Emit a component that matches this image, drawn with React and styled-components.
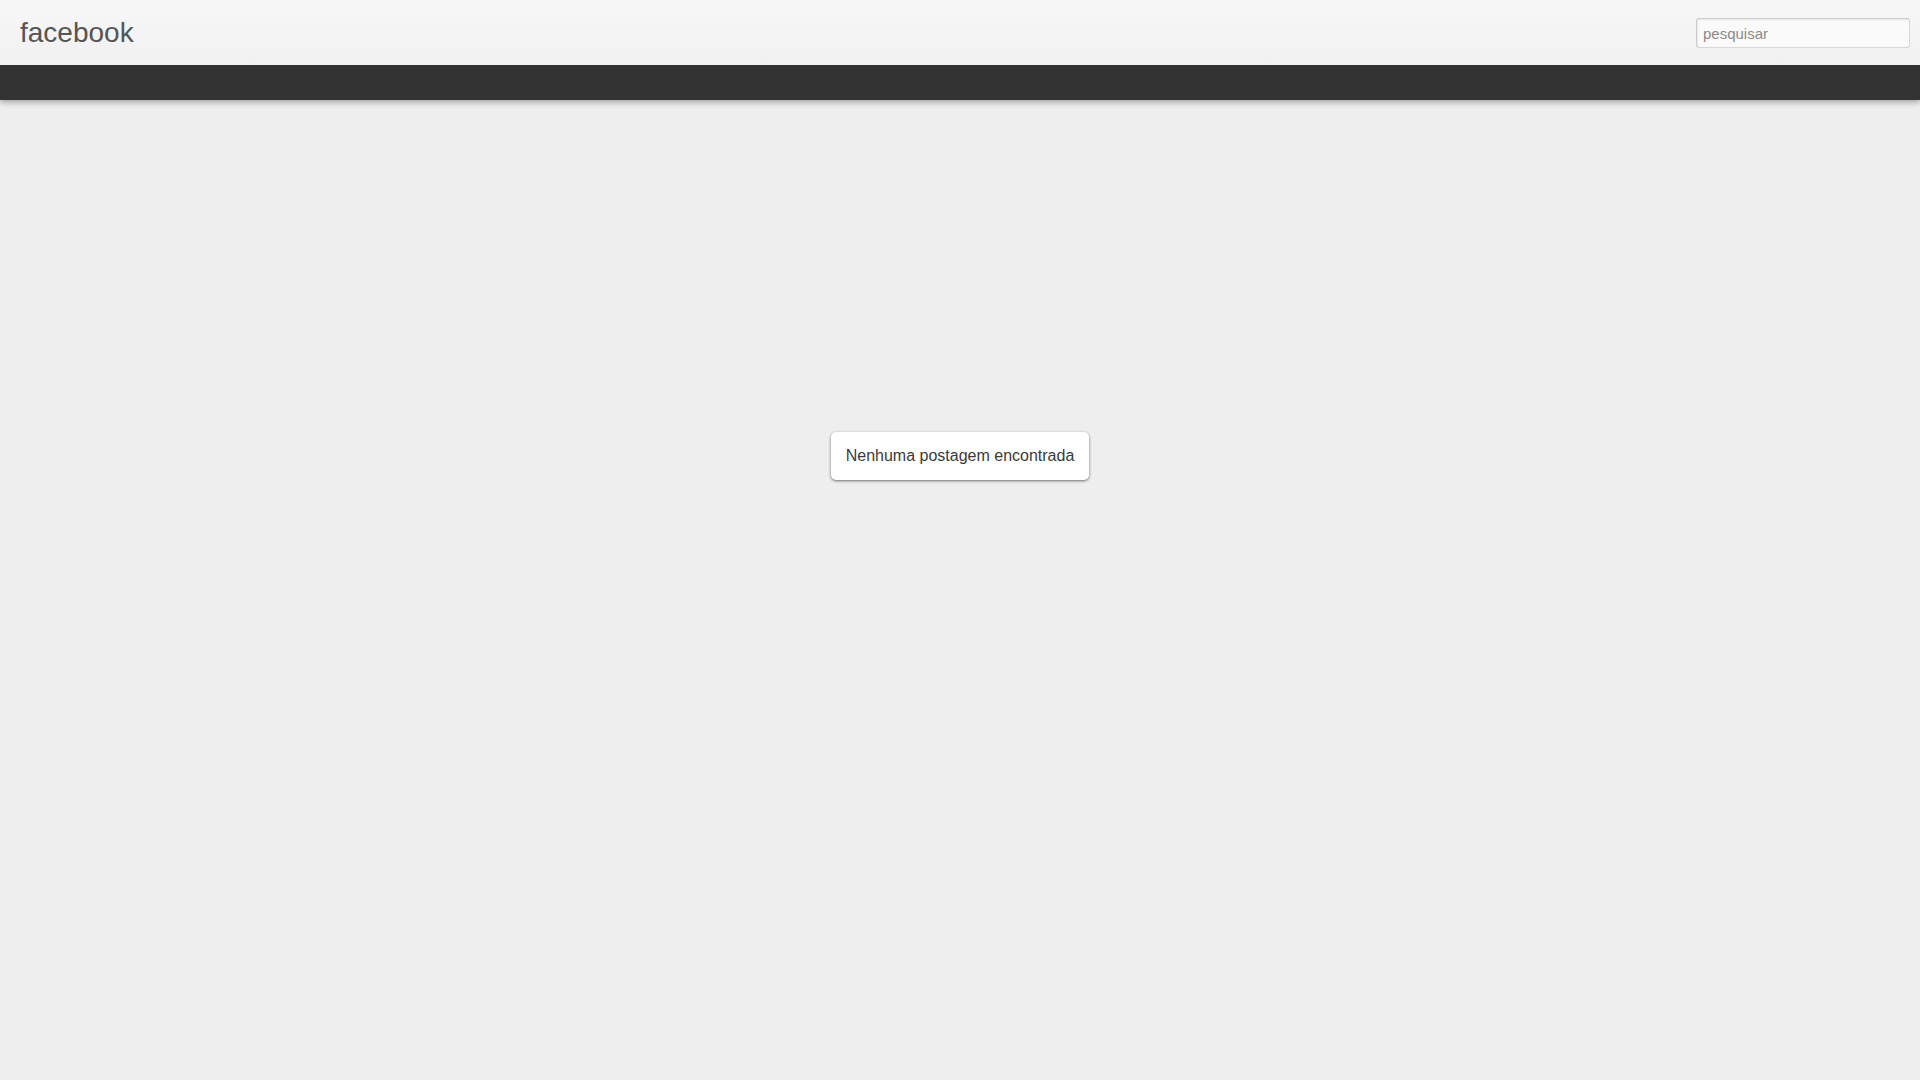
import React from "react";
import styled, { createGlobalStyle } from "styled-components";

const Global = createGlobalStyle`
  html, body { margin: 0; padding: 0; }
  body {
    background: #eeeeee;
    font-family: "Liberation Sans", Arial, Helvetica, sans-serif;
    min-height: 1080px;
  }
`;

const Header = styled.header`
  position: relative;
  z-index: 2;
  box-shadow: 0 2px 6px rgba(0, 0, 0, 0.35);
`;

const TopBar = styled.div`
  height: 65px;
  display: flex;
  align-items: center;
  justify-content: space-between;
  padding: 0 10px 0 20px;
  background: linear-gradient(to bottom, #f7f7f7, #f1f1f1);
  box-sizing: border-box;
`;

const Logo = styled.a`
  font-size: 28px;
  color: #555555;
  text-decoration: none;
  line-height: 1;
  margin-top: 1px;
`;

const Search = styled.input`
  width: 214px;
  height: 30px;
  box-sizing: border-box;
  margin-top: 1px;
  padding: 4px 6px;
  border: 1px solid #d8d8d8;
  border-top-color: #cccccc;
  border-left-color: #cccccc;
  border-radius: 3px;
  background: #fafafa;
  box-shadow: inset 1px 1px 2px rgba(0, 0, 0, 0.08);
  font-family: "Liberation Sans", Arial, sans-serif;
  font-size: 15px;
  color: #555;
  outline: none;
  &::placeholder { color: #8a8a8a; }
`;

const NavBar = styled.nav`
  height: 35px;
  background: #333333;
`;

const Main = styled.main`
  display: flex;
  justify-content: center;
  padding-top: 332px;
`;

const Notice = styled.div`
  background: #ffffff;
  color: #3a3a3a;
  font-size: 16px;
  line-height: 18px;
  padding: 15px 15px;
  border-radius: 5px;
  box-shadow: 0 1px 3px rgba(0, 0, 0, 0.55);
`;

export default function App() {
  return (
    <>
      <Global />
      <Header>
        <TopBar>
          <Logo href="#">facebook</Logo>
          <Search type="text" placeholder="pesquisar" />
        </TopBar>
        <NavBar />
      </Header>
      <Main>
        <Notice>Nenhuma postagem encontrada</Notice>
      </Main>
    </>
  );
}
